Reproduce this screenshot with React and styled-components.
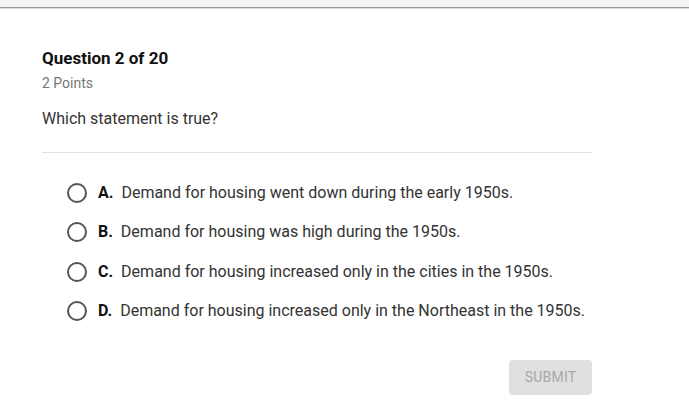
import React from "react";
import styled, { createGlobalStyle } from "styled-components";

const Global = createGlobalStyle`
  body {
    margin: 0;
    background: #fff;
    font-family: Roboto, "Liberation Sans", sans-serif;
  }
`;

const TopBar = styled.div`
  height: 7px;
  background: #f3f3f3;
  border-bottom: 1px solid #9a9a9a;
  box-shadow: 0 1px 0 #dcdcdc;
`;

const Card = styled.div`
  width: 550px;
  padding: 40px 0 0 42px;
`;

const Title = styled.h2`
  margin: 0;
  font-size: 17px;
  font-weight: 700;
  color: #111;
  line-height: 20px;
`;

const Points = styled.div`
  margin-top: 7px;
  font-size: 14px;
  color: #777;
  line-height: 16px;
`;

const Prompt = styled.div`
  margin-top: 18px;
  font-size: 16px;
  color: #333;
  line-height: 20px;
  padding-bottom: 23px;
  border-bottom: 1px solid #e2e2e2;
`;

const Options = styled.div`
  display: flex;
  flex-direction: column;
  gap: 19.3px;
  padding: 30px 0 0 25px;
`;

const Option = styled.label`
  display: flex;
  align-items: center;
  font-size: 16px;
  color: #333;
  line-height: 20px;
  cursor: pointer;
`;

const Radio = styled.span`
  width: 16px;
  height: 16px;
  border: 2px solid #555;
  border-radius: 50%;
  margin-right: 11px;
  flex: none;
`;

const Letter = styled.b`
  color: #111;
  margin-right: 8px;
`;

const Footer = styled.div`
  display: flex;
  justify-content: flex-end;
  margin-top: 39px;
`;

const Submit = styled.button`
  width: 83px;
  height: 35px;
  border: none;
  border-radius: 4px;
  background: #e0e0e0;
  color: #a8a8a8;
  font-family: Roboto, "Liberation Sans", sans-serif;
  font-size: 14px;
  letter-spacing: 0.2px;
`;

const options = [
  ["A.", "Demand for housing went down during the early 1950s."],
  ["B.", "Demand for housing was high during the 1950s."],
  ["C.", "Demand for housing increased only in the cities in the 1950s."],
  ["D.", "Demand for housing increased only in the Northeast in the 1950s."],
];

export default function App() {
  return (
    <>
      <Global />
      <TopBar />
      <Card>
        <Title>Question 2 of 20</Title>
        <Points>2 Points</Points>
        <Prompt>Which statement is true?</Prompt>
        <Options>
          {options.map(([l, t]) => (
            <Option key={l}>
              <Radio />
              <Letter>{l}</Letter>
              {t}
            </Option>
          ))}
        </Options>
        <Footer>
          <Submit disabled>SUBMIT</Submit>
        </Footer>
      </Card>
    </>
  );
}
